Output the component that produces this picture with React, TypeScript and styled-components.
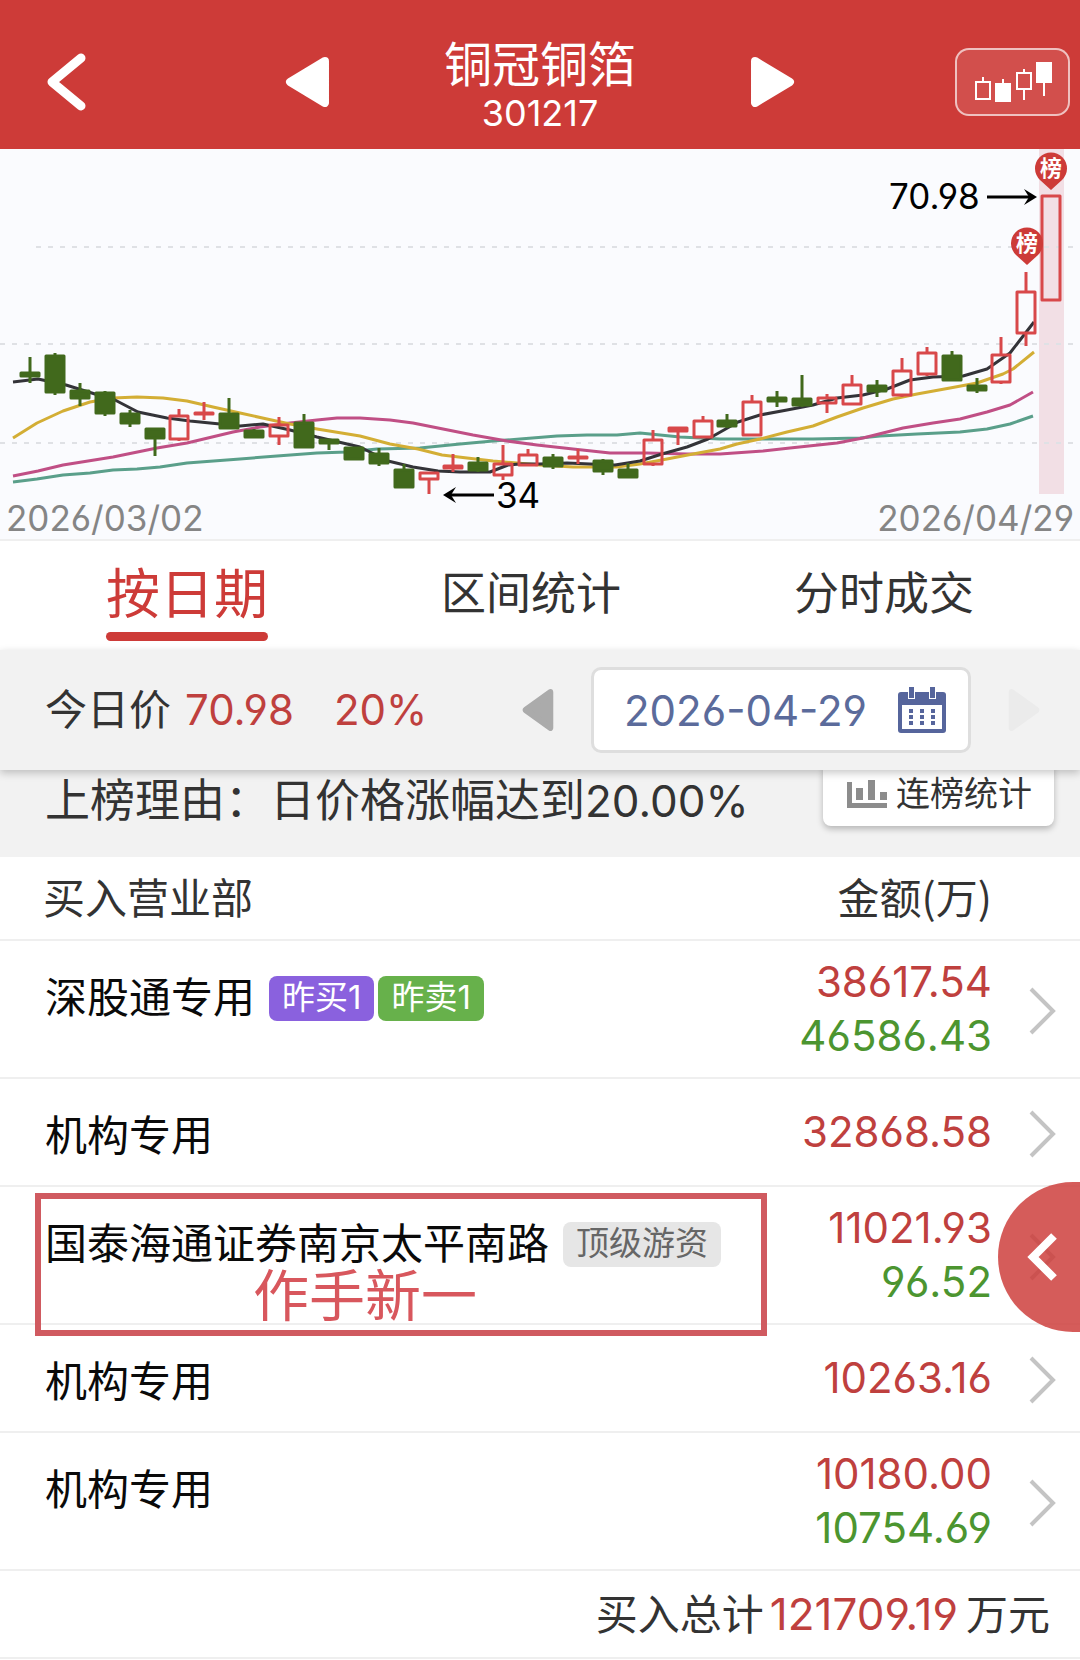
import React from "react";
import styled, { createGlobalStyle, css } from "styled-components";

const color = {
  brand: "#cd3b38",
  rise: "#bf403e",
  fall: "#4c9530",
  ink: "#333333",
  line: "#efefef",
  panel: "#f2f2f2",
  date: "#5b6b9b",
};

const GlobalStyle = createGlobalStyle`
  *, *::before, *::after { box-sizing: border-box; }
  body {
    margin: 0;
    background: #fff;
    color: ${color.ink};
    font-family: "Noto Sans CJK SC", sans-serif;
  }
  button {
    margin: 0;
    padding: 0;
    border: 0;
    background: none;
    color: inherit;
    font: inherit;
    cursor: pointer;
  }
  svg { display: block; }
`;

const digits = css`
  font-family: Inter, "Noto Sans CJK SC", sans-serif;
  font-feature-settings: "cv03", "cv04";
`;

const Page = styled.main`
  overflow-x: hidden;
`;

const Header = styled.header`
  display: grid;
  grid-template-columns: 1fr auto 1fr;
  align-items: center;
  padding: 25px 10px 11px;
  background: ${color.brand};
  color: #fff;
`;

const HeaderSide = styled.div<{ $end?: boolean }>`
  display: flex;
  justify-content: ${(p) => (p.$end ? "flex-end" : "flex-start")};
  padding-left: ${(p) => (p.$end ? 0 : 33)}px;
`;

const StockSwitcher = styled.div`
  display: flex;
  align-items: center;
  gap: 114px;
`;

const StockTitle = styled.div`
  padding-top: 9px;
  text-align: center;
`;

const StockName = styled.h1`
  margin: 0;
  font-size: 48px;
  font-weight: 400;
  line-height: 54px;
`;

const StockCode = styled.div`
  ${digits}
  font-size: 36px;
  line-height: 50px;
`;

const ChartButton = styled.button`
  display: flex;
  align-items: center;
  justify-content: center;
  width: 115px;
  height: 68px;
  border: 2px solid rgba(255, 255, 255, 0.65);
  border-radius: 14px;
  background: rgba(255, 255, 255, 0.1);
`;

const ChartPanel = styled.section`
  border-bottom: 2px solid ${color.line};
  background: #fafbfe;
`;

const ChartSvg = styled.svg`
  width: 100%;
  height: auto;
  overflow: visible;

  text {
    ${digits}
    font-size: 35px;
  }

  .pin {
    font-family: "Noto Sans CJK SC", sans-serif;
    font-size: 22px;
    font-weight: 700;
  }
`;

const ChartDates = styled.div`
  ${digits}
  display: flex;
  justify-content: space-between;
  padding: 4px 6px 0;
  color: #858585;
  font-size: 35px;
  line-height: 41px;
`;

const Tabs = styled.nav`
  display: flex;
  justify-content: space-between;
  height: 109px;
  padding: 0 106px;
`;

const Tab = styled.button<{ $active?: boolean }>`
  display: flex;
  flex-direction: column;
  align-items: stretch;
  padding-top: 5px;
  color: ${(p) => (p.$active ? color.brand : color.ink)};
  font-size: ${(p) => (p.$active ? 54 : 45)}px;
  line-height: 90px;

  &::after {
    content: "";
    height: 9px;
    margin-top: -4px;
    border-radius: 5px;
    background: ${(p) => (p.$active ? color.brand : "transparent")};
  }
`;

const FilterBar = styled.section`
  position: relative;
  z-index: 1;
  display: flex;
  align-items: center;
  justify-content: space-between;
  height: 120px;
  padding: 0 40px 0 45px;
  background: ${color.panel};
  box-shadow: 0 3px 8px rgba(0, 0, 0, 0.22);
`;

const Price = styled.div`
  display: flex;
  align-items: center;
`;

const PriceLabel = styled.span`
  padding-bottom: 7px;
  font-size: 42px;
`;

const PriceNumber = styled.span<{ $gap: number }>`
  ${digits}
  margin-left: ${(p) => p.$gap}px;
  padding-bottom: 2px;
  color: ${color.rise};
  font-size: 42px;
`;

const DateSwitcher = styled.div`
  display: flex;
  align-items: center;
  gap: 37px;
`;

const DateButton = styled.button`
  ${digits}
  display: flex;
  align-items: center;
  justify-content: space-between;
  width: 380px;
  height: 86px;
  padding: 0 22px 0 30px;
  border: 3px solid #dedede;
  border-radius: 10px;
  background: #fff;
  color: ${color.date};
  font-size: 42px;
`;

const ReasonBar = styled.section`
  display: flex;
  align-items: flex-start;
  justify-content: space-between;
  height: 95px;
  margin-top: -8px;
  padding: 0 26px 0 45px;
  background: ${color.panel};
`;

const Reason = styled.p`
  margin: 0;
  font-size: 45px;
  line-height: 72px;
  white-space: nowrap;
`;

const ReasonNumber = styled.span`
  ${digits}
  font-size: 44px;
`;

const StatsButton = styled.button`
  display: flex;
  align-items: center;
  gap: 9px;
  height: 64px;
  padding: 0 22px 0 24px;
  border-radius: 8px;
  background: #fff;
  box-shadow: 0 3px 6px rgba(0, 0, 0, 0.25);
`;

const StatsLabel = styled.span`
  padding-bottom: 6px;
  font-size: 34px;
`;

const Table = styled.table`
  width: 100%;
  border-collapse: separate;
  border-spacing: 0;
  font-size: 42px;
  line-height: 54px;
`;

const cell = css`
  padding: 0;
  border-bottom: 2px solid ${color.line};
  font-weight: 400;
`;

const HeadCell = styled.th<{ $right?: boolean }>`
  ${cell}
  height: 84px;
  padding-bottom: 4px;
  padding-left: ${(p) => (p.$right ? 0 : 43)}px;
  text-align: ${(p) => (p.$right ? "right" : "left")};
`;

const NameCell = styled.td<{ $tall: boolean }>`
  ${cell}
  position: relative;
  height: ${(p) => (p.$tall ? 138 : 108)}px;
  padding: 27px 0 0 45px;
  vertical-align: top;
  color: #0a0a0a;
  white-space: nowrap;
`;

const NameLine = styled.div`
  display: flex;
  align-items: center;
`;

const Tags = styled.span`
  display: flex;
  gap: 4px;
  margin-left: 14px;
  padding-top: 6px;
`;

const tagColors = {
  buy: ["#8a61de", "#fff"],
  sell: ["#67b14b", "#fff"],
  plain: ["#e6e6e6", "#666"],
};

const Tag = styled.span<{ $kind: keyof typeof tagColors }>`
  height: 45px;
  padding: 0 13px;
  border-radius: 8px;
  background: ${(p) => tagColors[p.$kind][0]};
  color: ${(p) => tagColors[p.$kind][1]};
  font-family: Inter, "Noto Sans CJK SC", sans-serif;
  font-size: 33px;
  line-height: 43px;
`;

const AmountCell = styled.td`
  ${cell}
  ${digits}
  width: 240px;
  text-align: right;
`;

const Amount = styled.div<{ $side: "buy" | "sell" }>`
  color: ${(p) => (p.$side === "buy" ? color.rise : color.fall)};
`;

const ArrowCell = styled.td`
  ${cell}
  position: relative;
  width: 88px;
  padding: 4px 0 0 37px;

  > button {
    display: block;
  }
`;

const TotalCell = styled.td`
  ${cell}
  height: 88px;
  padding: 0 30px 2px 0;
  text-align: right;
`;

const TotalNumber = styled.span`
  ${digits}
  margin: 0 8px 0 6px;
  color: ${color.rise};
  font-size: 44px;
`;

const NoteFrame = styled.div`
  position: absolute;
  z-index: 1;
  top: 6px;
  left: 35px;
  width: 732px;
  height: 143px;
  border: 6px solid #d05a60;
  pointer-events: none;
`;

const NoteText = styled.div`
  padding: 61px 0 0 212px;
  color: #d8575d;
  font-size: 56px;
  line-height: 64px;
`;

const DrawerHandle = styled.button`
  position: absolute;
  z-index: 2;
  top: -5px;
  right: 0;
  width: 82px;
  height: 150px;
  padding-left: 28px;
  border-radius: 75px 0 0 75px;
  background: rgba(205, 59, 56, 0.83);
`;

function Triangle({ flip, width, height, fill }: { flip?: boolean; width: number; height: number; fill: string }) {
  return (
    <svg width={width} height={height} viewBox="0 0 44 50" preserveAspectRatio="none" aria-hidden="true">
      <path
        d="M39 4 L5 25 L39 46 Z"
        transform={flip ? "matrix(-1 0 0 1 44 0)" : undefined}
        fill={fill}
        stroke={fill}
        strokeWidth="8"
        strokeLinejoin="round"
      />
    </svg>
  );
}

function CandlesIcon() {
  return (
    <svg width="78" height="42" viewBox="0 0 78 42" fill="none" stroke="#fff" strokeWidth="2" aria-hidden="true">
      <path d="M9 16v5M29 18v5M50 8v4M50 28v11M70 22v13" />
      <path d="M2 21h14v17H2z M43 12h14v16H43z" />
      <path d="M22 23h14v17H22z M63 2h14v19H63z" fill="#fff" />
    </svg>
  );
}

function CalendarIcon() {
  const dots = [0, 1, 2].flatMap((r) => [0, 1, 2].map((c) => [11 + c * 11, 22 + r * 6]));
  return (
    <svg width="48" height="46" viewBox="0 0 48 46" aria-hidden="true">
      <path d="M3 5h42a3 3 0 0 1 3 3v35a3 3 0 0 1-3 3H3a3 3 0 0 1-3-3V8a3 3 0 0 1 3-3z" fill="#56659c" />
      <path d="M4 18h40v24H4z" fill="#fff" />
      <path d="M10 0h7v12h-7z M31 0h7v12h-7z" fill="#fff" />
      <path d="M11 0h5v11h-5z M32 0h5v11h-5z" fill="#56659c" />
      {dots.map(([x, y]) => (
        <rect key={`${x}-${y}`} x={x} y={y} width="4" height="4" fill="#56659c" />
      ))}
    </svg>
  );
}

function BarsIcon() {
  return (
    <svg width="40" height="28" viewBox="0 0 40 28" fill="#8c8c8c" aria-hidden="true">
      <path d="M0 2h5v21h35v5H0z M9 8h7v12H9z M21 0h7v20h-7z M33 12h7v8h-7z" />
    </svg>
  );
}

function Chevron() {
  return (
    <svg width="28" height="48" viewBox="0 0 28 48" fill="none" stroke="#c4c4c4" strokeWidth="4" aria-hidden="true">
      <path d="M2 2 L24 24 L2 46" />
    </svg>
  );
}

// Each candle: high, body top, body bottom, low, rising (1) or falling (0).
const candles: [number, number, number, number, 0 | 1][] = [
  [208, 223, 228, 234, 0],
  [204, 206, 244, 246, 0],
  [234, 241, 250, 257, 0],
  [242, 243, 265, 267, 0],
  [261, 264, 275, 278, 0],
  [279, 279, 290, 307, 0],
  [260, 266, 291, 292, 1],
  [253, 263, 265, 271, 1],
  [249, 264, 280, 280, 0],
  [280, 281, 289, 289, 0],
  [268, 275, 288, 296, 1],
  [265, 273, 299, 299, 0],
  [290, 290, 295, 301, 0],
  [298, 298, 311, 311, 0],
  [299, 304, 315, 317, 0],
  [315, 320, 339, 339, 0],
  [323, 323, 331, 345, 1],
  [305, 316, 320, 323, 1],
  [308, 313, 322, 323, 0],
  [296, 314, 327, 331, 1],
  [300, 305, 317, 317, 1],
  [305, 308, 318, 320, 0],
  [300, 307, 309, 315, 1],
  [310, 311, 323, 326, 0],
  [314, 320, 329, 329, 0],
  [281, 290, 316, 317, 1],
  [278, 278, 283, 296, 1],
  [267, 271, 289, 289, 1],
  [265, 271, 278, 279, 0],
  [246, 252, 287, 287, 1],
  [242, 248, 253, 258, 0],
  [226, 249, 257, 258, 0],
  [245, 248, 255, 264, 1],
  [226, 235, 256, 256, 1],
  [231, 236, 243, 248, 0],
  [209, 221, 247, 248, 1],
  [198, 203, 226, 227, 1],
  [202, 206, 232, 232, 0],
  [229, 236, 242, 244, 0],
  [188, 205, 234, 235, 1],
  [123, 142, 185, 197, 1],
  [46, 46, 152, 152, 1],
];

const averages = [
  {
    stroke: "#5a9f8a",
    points:
      "13,333 37,330 63,326 90,324 113,321 137,320 160,318 187,314 240,310 277,307 317,304 347,303 377,300 420,299 460,295 493,292 520,290 557,287 587,286 617,286 640,284 660,286 680,288 720,290 757,290 813,290 860,289 880,287 917,285 960,283 987,280 1010,275 1033,267",
  },
  {
    stroke: "#c04f85",
    points:
      "13,327 38,322 63,316 113,308 157,299 187,294 233,283 260,278 290,274 317,271 337,269 360,269 390,271 413,274 443,280 473,286 507,292 537,296 573,300 610,304 647,304 687,305 720,305 763,302 790,299 837,294 863,289 903,279 933,274 960,270 987,263 1010,256 1033,243",
  },
  {
    stroke: "#d3ae35",
    points:
      "13,289 37,274 63,262 90,253 113,249 137,248 163,249 187,252 213,258 240,264 267,270 290,275 317,280 360,287 390,295 418,300 442,306 467,309 493,312 517,314 540,316 573,318 617,318 640,315 667,310 693,305 720,300 737,295 760,290 787,283 813,277 837,268 863,259 893,250 917,245 950,239 977,234 1003,225 1013,220 1034,203",
  },
  {
    stroke: "#333338",
    points:
      "13,233 38,230 66,236 95,245 115,251 138,263 167,269 190,272 220,275 240,277 263,275 290,281 317,288 360,298 388,312 413,318 438,322 460,323 490,323 508,316 520,315 540,315 567,314 590,315 615,316 640,312 662,305 687,298 708,290 738,273 760,266 787,261 813,256 837,249 863,246 887,240 910,231 933,228 963,227 987,220 1010,204 1034,173",
  },
];

function Pin({ x, y }: { x: number; y: number }) {
  return (
    <g>
      <path
        d={`M${x} ${y + 37} L${x - 11} ${y + 27} A16 16 0 1 1 ${x + 11} ${y + 27} Z`}
        fill={color.brand}
      />
      <text className="pin" x={x} y={y + 23} textAnchor="middle" fill="#fff">
        榜
      </text>
    </g>
  );
}

function CandleChart() {
  return (
    <ChartSvg viewBox="0 0 1080 345" role="img" aria-label="日K线图">
      <rect x="1039" y="0" width="25" height="345" fill="#f2dfe5" />
      <g stroke="#dfe1e5" strokeWidth="2" strokeDasharray="5 7">
        <path d="M36 98H1080" />
        <path d="M0 195H1080" />
        <path d="M0 294H1080" />
      </g>
      {averages.map((line) => (
        <polyline key={line.stroke} points={line.points} fill="none" stroke={line.stroke} strokeWidth="3" strokeLinejoin="round" />
      ))}
      {candles.map(([high, top, bottom, low, up], i) => {
        const x = Math.round(30 + i * 24.91);
        const tone = up ? "#d8484a" : "#41691c";
        return (
          <g key={i} stroke={tone} strokeWidth="3" strokeLinejoin="round">
            <path d={`M${x} ${high}V${top}M${x} ${bottom}V${low}`} />
            <rect
              x={x - 9}
              y={top + 1}
              width="18"
              height={Math.max(bottom - top - 2, 1)}
              fill={up ? "none" : tone}
            />
          </g>
        );
      })}
      <Pin x={1051} y={4} />
      <Pin x={1027} y={79} />
      <text x="889" y="60">
        70.98
      </text>
      <path d="M987 48H1032" stroke="#000" strokeWidth="3" />
      <path d="M1037 48L1024 40L1029 48L1024 56Z" fill="#000" />
      <text x="496" y="359">
        34
      </text>
      <path d="M448 346H494" stroke="#000" strokeWidth="3" />
      <path d="M443 346L456 338L451 346L456 354Z" fill="#000" />
    </ChartSvg>
  );
}

type TagKind = keyof typeof tagColors;

interface Seat {
  name: string;
  tags?: { text: string; kind: TagKind }[];
  buy: string;
  sell?: string;
  note?: string;
}

const seats: Seat[] = [
  {
    name: "深股通专用",
    tags: [
      { text: "昨买1", kind: "buy" },
      { text: "昨卖1", kind: "sell" },
    ],
    buy: "38617.54",
    sell: "46586.43",
  },
  { name: "机构专用", buy: "32868.58" },
  {
    name: "国泰海通证券南京太平南路",
    tags: [{ text: "顶级游资", kind: "plain" }],
    buy: "11021.93",
    sell: "96.52",
    note: "作手新一",
  },
  { name: "机构专用", buy: "10263.16" },
  { name: "机构专用", buy: "10180.00", sell: "10754.69" },
];

export default function App() {
  return (
    <Page>
      <GlobalStyle />
      <Header>
        <HeaderSide>
          <button aria-label="返回">
            <svg width="46" height="64" viewBox="0 0 46 64" fill="none" stroke="#fff" strokeWidth="9" strokeLinecap="round" strokeLinejoin="round" aria-hidden="true">
              <path d="M38 8 L9 32 L38 56" />
            </svg>
          </button>
        </HeaderSide>
        <StockSwitcher>
          <button aria-label="上一只">
            <Triangle width={45} height={50} fill="#fff" />
          </button>
          <StockTitle>
            <StockName>铜冠铜箔</StockName>
            <StockCode>301217</StockCode>
          </StockTitle>
          <button aria-label="下一只">
            <Triangle flip width={45} height={50} fill="#fff" />
          </button>
        </StockSwitcher>
        <HeaderSide $end>
          <ChartButton aria-label="K线">
            <CandlesIcon />
          </ChartButton>
        </HeaderSide>
      </Header>

      <ChartPanel>
        <CandleChart />
        <ChartDates>
          <span>2026/03/02</span>
          <span>2026/04/29</span>
        </ChartDates>
      </ChartPanel>

      <Tabs>
        <Tab $active>按日期</Tab>
        <Tab>区间统计</Tab>
        <Tab>分时成交</Tab>
      </Tabs>

      <FilterBar>
        <Price>
          <PriceLabel>今日价</PriceLabel>
          <PriceNumber $gap={14}>70.98</PriceNumber>
          <PriceNumber $gap={40}>20%</PriceNumber>
        </Price>
        <DateSwitcher>
          <button aria-label="前一天">
            <Triangle width={32} height={42} fill="#ababab" />
          </button>
          <DateButton>
            2026-04-29
            <CalendarIcon />
          </DateButton>
          <button aria-label="后一天" disabled>
            <Triangle flip width={32} height={42} fill="#ebebeb" />
          </button>
        </DateSwitcher>
      </FilterBar>

      <ReasonBar>
        <Reason>
          上榜理由：日价格涨幅达到<ReasonNumber>20.00%</ReasonNumber>
        </Reason>
        <StatsButton>
          <BarsIcon />
          <StatsLabel>连榜统计</StatsLabel>
        </StatsButton>
      </ReasonBar>

      <Table>
        <thead>
          <tr>
            <HeadCell scope="col">买入营业部</HeadCell>
            <HeadCell scope="col" $right>
              金额(万)
            </HeadCell>
            <HeadCell aria-hidden="true" />
          </tr>
        </thead>
        <tbody>
          {seats.map((seat, i) => (
            <tr key={i}>
              <NameCell $tall={Boolean(seat.sell)}>
                <NameLine>
                  {seat.name}
                  {seat.tags && (
                    <Tags>
                      {seat.tags.map((tag) => (
                        <Tag key={tag.text} $kind={tag.kind}>
                          {tag.text}
                        </Tag>
                      ))}
                    </Tags>
                  )}
                </NameLine>
                {seat.note && (
                  <NoteFrame>
                    <NoteText>{seat.note}</NoteText>
                  </NoteFrame>
                )}
              </NameCell>
              <AmountCell>
                <Amount $side="buy">{seat.buy}</Amount>
                {seat.sell && <Amount $side="sell">{seat.sell}</Amount>}
              </AmountCell>
              <ArrowCell>
                <button aria-label={`查看${seat.name}`}>
                  <Chevron />
                </button>
                {seat.note && (
                  <DrawerHandle aria-label="展开侧栏">
                    <svg width="32" height="50" viewBox="0 0 32 50" fill="none" stroke="#fff" strokeWidth="8" aria-hidden="true">
                      <path d="M28 4 L7 25 L28 46" />
                    </svg>
                  </DrawerHandle>
                )}
              </ArrowCell>
            </tr>
          ))}
        </tbody>
        <tfoot>
          <tr>
            <TotalCell colSpan={3}>
              买入总计<TotalNumber>121709.19</TotalNumber>万元
            </TotalCell>
          </tr>
        </tfoot>
      </Table>
    </Page>
  );
}
